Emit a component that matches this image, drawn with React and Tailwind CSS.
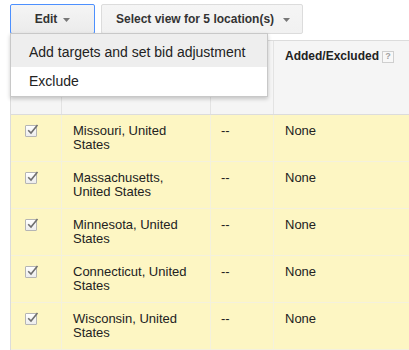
import React from "react";

const rows = [
  "Missouri, United States",
  "Massachusetts, United States",
  "Minnesota, United States",
  "Connecticut, United States",
  "Wisconsin, United States",
];

function Caret() {
  return (
    <svg width="7" height="4" viewBox="0 0 7 4" className="block">
      <polygon points="0,0 7,0 3.5,4" fill="#777" />
    </svg>
  );
}

function Checkbox() {
  return (
    <div className="relative w-[12px] h-[12px] border border-[#b5b5b5] rounded-[1px] bg-gradient-to-b from-[#ffffff] to-[#ededed]">
      <svg
        width="14"
        height="13"
        viewBox="0 0 14 13"
        className="absolute left-[0px] top-[-3px]"
      >
        <path d="M2.2 7.2 L5 10 L11.5 2" fill="none" stroke="#6f6f6f" strokeWidth="1.6" />
      </svg>
    </div>
  );
}

export default function App() {
  return (
    <div className="relative w-[409px] h-[350px] overflow-hidden bg-white font-['Liberation_Sans',Arial,sans-serif] text-[#222]">
      {/* toolbar */}
      <div className="flex gap-[6px] pl-[10px] pt-[4px]">
        <div className="flex h-[30px] w-[85px] items-center justify-center gap-[6px] rounded-[2px] border border-[#4d90fe] bg-gradient-to-b from-[#f5f5f5] to-[#ebebeb] text-[12px] font-bold text-[#333]">
          <span>Edit</span>
          <span className="mt-[2px]">
            <Caret />
          </span>
        </div>
        <div className="flex h-[30px] items-center gap-[9px] rounded-[2px] border border-[#dcdcdc] bg-gradient-to-b from-[#f5f5f5] to-[#f1f1f1] pl-[14px] pr-[12px] text-[12px] font-bold text-[#333]">
          <span>Select view for 5 location(s)</span>
          <span className="mt-[2px]">
            <Caret />
          </span>
        </div>
      </div>

      {/* table */}
      <div className="ml-[10px] mt-[6px] border-l border-t border-[#dcdcdc]">
        <div className="grid h-[74px] grid-cols-[50px_149px_63px_1fr] border-b border-[#dcdcdc] bg-[#f5f5f5]">
          <div />
          <div className="border-l border-[#e3e3e3]" />
          <div className="border-l border-[#e3e3e3]" />
          <div className="border-l border-[#e3e3e3] pl-[11px] pt-[8px]">
            <div className="flex items-center gap-[3px] text-[12px] font-bold leading-[15px] text-[#222]">
              <span>Added/Excluded</span>
              <span className="flex h-[12px] w-[12px] items-center justify-center border border-[#cfcfcf] bg-[#f8f8f8] text-[9px] font-bold leading-none text-[#a0a0a0]">
                ?
              </span>
            </div>
          </div>
        </div>
        {rows.map((r) => (
          <div
            key={r}
            className="grid h-[47px] grid-cols-[50px_149px_63px_1fr] border-b border-[#f4f1dd] bg-[#fdf6c3] text-[13px] leading-[14px]"
          >
            <div className="pl-[14px] pt-[10px]">
              <Checkbox />
            </div>
            <div className="border-l border-[#f4f1dd] pl-[11px] pr-[12px] pt-[9px]">{r}</div>
            <div className="border-l border-[#f4f1dd] pl-[10px] pt-[9px]">--</div>
            <div className="border-l border-[#f4f1dd] pl-[11px] pt-[9px]">None</div>
          </div>
        ))}
      </div>

      {/* dropdown menu */}
      <div className="absolute left-[10px] top-[33px] z-10 w-[258px] border border-[#c8c8c8] bg-white shadow-[0_2px_4px_rgba(0,0,0,0.2)] text-[14px] text-[#222]">
        <div className="flex h-[33px] items-center bg-[#eeeeee] pl-[18px] pt-[3px]">
          Add targets and set bid adjustment
        </div>
        <div className="flex h-[29px] items-center pl-[18px]">Exclude</div>
      </div>
    </div>
  );
}
